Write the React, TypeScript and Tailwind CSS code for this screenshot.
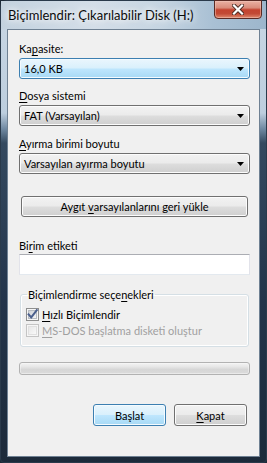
import React from "react";

const grayBtn =
  "border border-[#707070] bg-[linear-gradient(180deg,#f2f2f2_0%,#ebebeb_48%,#dddddd_52%,#cfcfcf_100%)] shadow-[inset_0_0_0_1px_#fcfcfc]";
const blueBtn =
  "border border-[#3c7fb1] bg-[linear-gradient(180deg,#eaf6fd_0%,#d9f0fc_48%,#bee6fd_52%,#a7d9f5_100%)] shadow-[inset_0_0_0_1px_#f4fbff]";

function Arrow() {
  return (
    <svg width="7" height="4" viewBox="0 0 7 4" className="shrink-0">
      <path d="M0 0 H7 L3.5 4 Z" fill="#000" />
    </svg>
  );
}

function Combo({ children, hot }: { children: React.ReactNode; hot?: boolean }) {
  return (
    <div
      className={`h-[21px] w-[231px] ml-[11px] rounded-[3px] flex items-center justify-between pl-[4px] pr-[5px] ${
        hot ? blueBtn : grayBtn
      }`}
    >
      <span className="leading-[15px]">{children}</span>
      <Arrow />
    </div>
  );
}

function Check({ checked, disabled }: { checked?: boolean; disabled?: boolean }) {
  return (
    <svg width="13" height="13" viewBox="0 0 13 13" className="shrink-0 overflow-visible">
      <defs>
        <linearGradient id={disabled ? "cbd" : "cbe"} x1="0" y1="0" x2="1" y2="1">
          <stop offset="0" stopColor={disabled ? "#e6e6e6" : "#cbcfd5"} />
          <stop offset="1" stopColor={disabled ? "#fafafa" : "#f7f7f7"} />
        </linearGradient>
      </defs>
      <rect x="0.5" y="0.5" width="12" height="12" fill="#f6f6f6" stroke={disabled ? "#c4c4c4" : "#8e8f8f"} />
      <rect x="2.5" y="2.5" width="8" height="8" fill={`url(#${disabled ? "cbd" : "cbe"})`} stroke={disabled ? "#e0e0e0" : "#b7bcc2"} />
      {checked && (
        <path d="M2.6 6.4 L5.2 9.4 L10.8 2.2" fill="none" stroke="#4a5f8c" strokeWidth="2" strokeLinecap="square" />
      )}
    </svg>
  );
}

export default function App() {
  return (
    <div className="w-[267px] h-[463px] overflow-hidden bg-[#1c2a38]">
      <div className="relative w-[267px] h-[463px] rounded-t-[7px] rounded-b-[4px] border border-[#2a3a4b] bg-[linear-gradient(180deg,#c9d7e4_0px,#bdcede_112px,#6f88a1_128px,#34495f_142px,#23344a_300px,#1c2a3a_100%)] font-['Lato','Liberation_Sans',sans-serif] text-[11px] text-black">
        {/* title bar */}
        <div className="h-[28px] pl-[7px] pt-[6px] bg-[linear-gradient(90deg,#c3d2df_0%,#d4dee8_35%,#c6d5e2_60%,#a9c0d4_80%,#9db6cc_100%)]">
          <div className="text-[13px] leading-[16px] text-[#0b0b0b] [text-shadow:0_0_6px_#ffffff,0_0_10px_#ffffff]">
            Biçimlendir: Çıkarılabilir Disk (H:)
          </div>
        </div>
        {/* close button */}
        <div className="absolute top-[-1px] right-[4px] w-[48px] h-[19px] rounded-b-[4px] border border-[#5a2a24] bg-[linear-gradient(180deg,#eab1a3_0%,#d98c7b_40%,#c4432f_52%,#c24a35_75%,#e08a6f_100%)] shadow-[inset_0_0_0_1px_#f1c7bb80] flex items-center justify-center">
          <svg width="12" height="11" viewBox="0 0 12 11">
            <path d="M2 1.5 L10 9.5 M10 1.5 L2 9.5" stroke="#4a2a22" strokeWidth="4" strokeLinecap="square" />
            <path d="M2 1.5 L10 9.5 M10 1.5 L2 9.5" stroke="#ffffff" strokeWidth="2.2" strokeLinecap="square" />
          </svg>
        </div>

        {/* client area */}
        <div className="mx-[6px] h-[428px] border border-[#6f8193] bg-[#f0f0f0] flex flex-col">
          <div className="mt-[11px] ml-[11px] leading-[15px]">
            Ka<u className="underline-offset-[2px]">p</u>asite:
          </div>
          <div className="mt-[2px]">
            <Combo hot>16,0 KB</Combo>
          </div>

          <div className="mt-[9px] ml-[11px] leading-[15px]">
            <u className="underline-offset-[2px]">D</u>osya sistemi
          </div>
          <div className="mt-[2px]">
            <Combo>FAT (Varsayılan)</Combo>
          </div>

          <div className="mt-[10px] ml-[11px] leading-[15px]">
            <u className="underline-offset-[2px]">A</u>yırma birimi boyutu
          </div>
          <div className="mt-[2px]">
            <Combo>Varsayılan ayırma boyutu</Combo>
          </div>

          <div
            className={`mt-[22px] ml-[13px] w-[227px] h-[21px] rounded-[3px] flex items-center justify-center leading-[15px] whitespace-pre ${grayBtn}`}
          >
            Aygıt <u className="underline-offset-[2px]">v</u>arsayılanlarını geri yükle
          </div>

          <div className="mt-[21px] ml-[11px] leading-[15px]">
            Bi<u className="underline-offset-[2px]">r</u>im etiketi
          </div>
          <div className="mt-[1px] ml-[11px] w-[231px] h-[21px] bg-white border border-[#abadb3] border-t-[#abadb3] border-l-[#e2e3ea] border-r-[#e2e3ea] border-b-[#e3e9ef]" />

          <fieldset className="mt-[12px] ml-[12px] w-[229px] border border-[#d5dfe5] rounded-[3px] shadow-[inset_0_0_0_1px_#ffffff] pl-[5px] pb-[9px]">
            <legend className="ml-[1px] px-[1px] leading-[15px]">
              Biçimlendirme seçe<u className="underline-offset-[2px]">n</u>ekleri
            </legend>
            <div className="mt-[6px] h-[13px] flex items-center gap-[3px]">
              <Check checked />
              <span className="leading-[15px]">
                <u className="underline-offset-[2px]">H</u>ızlı Biçimlendir
              </span>
            </div>
            <div className="mt-[3px] h-[13px] flex items-center gap-[3px] text-[#a0a0a0]">
              <Check disabled />
              <span className="leading-[15px]">
                <u className="underline-offset-[2px]">M</u>S-DOS başlatma disketi oluştur
              </span>
            </div>
          </fieldset>

          <div className="mt-[15px] ml-[11px] w-[231px] h-[13px] rounded-[3px] border border-[#b2b2b2] bg-[linear-gradient(180deg,#f4f4f4_0%,#e6e6e6_35%,#d6d6d6_60%,#dcdcdc_100%)] shadow-[inset_0_0_0_1px_#f7f7f780]" />

          <div className="mt-[29px] ml-[85px] flex gap-[8px]">
            <div
              className={`w-[73px] h-[22px] rounded-[3px] flex items-center justify-center leading-[15px] border-[#3c7fb1] ${blueBtn} shadow-[inset_0_0_0_1px_#4fc4f6]`}
            >
              Başlat
            </div>
            <div className={`w-[73px] h-[22px] rounded-[3px] flex items-center justify-center leading-[15px] ${grayBtn}`}>
              <u className="underline-offset-[2px]">K</u>apat
            </div>
          </div>
        </div>
      </div>
    </div>
  );
}
